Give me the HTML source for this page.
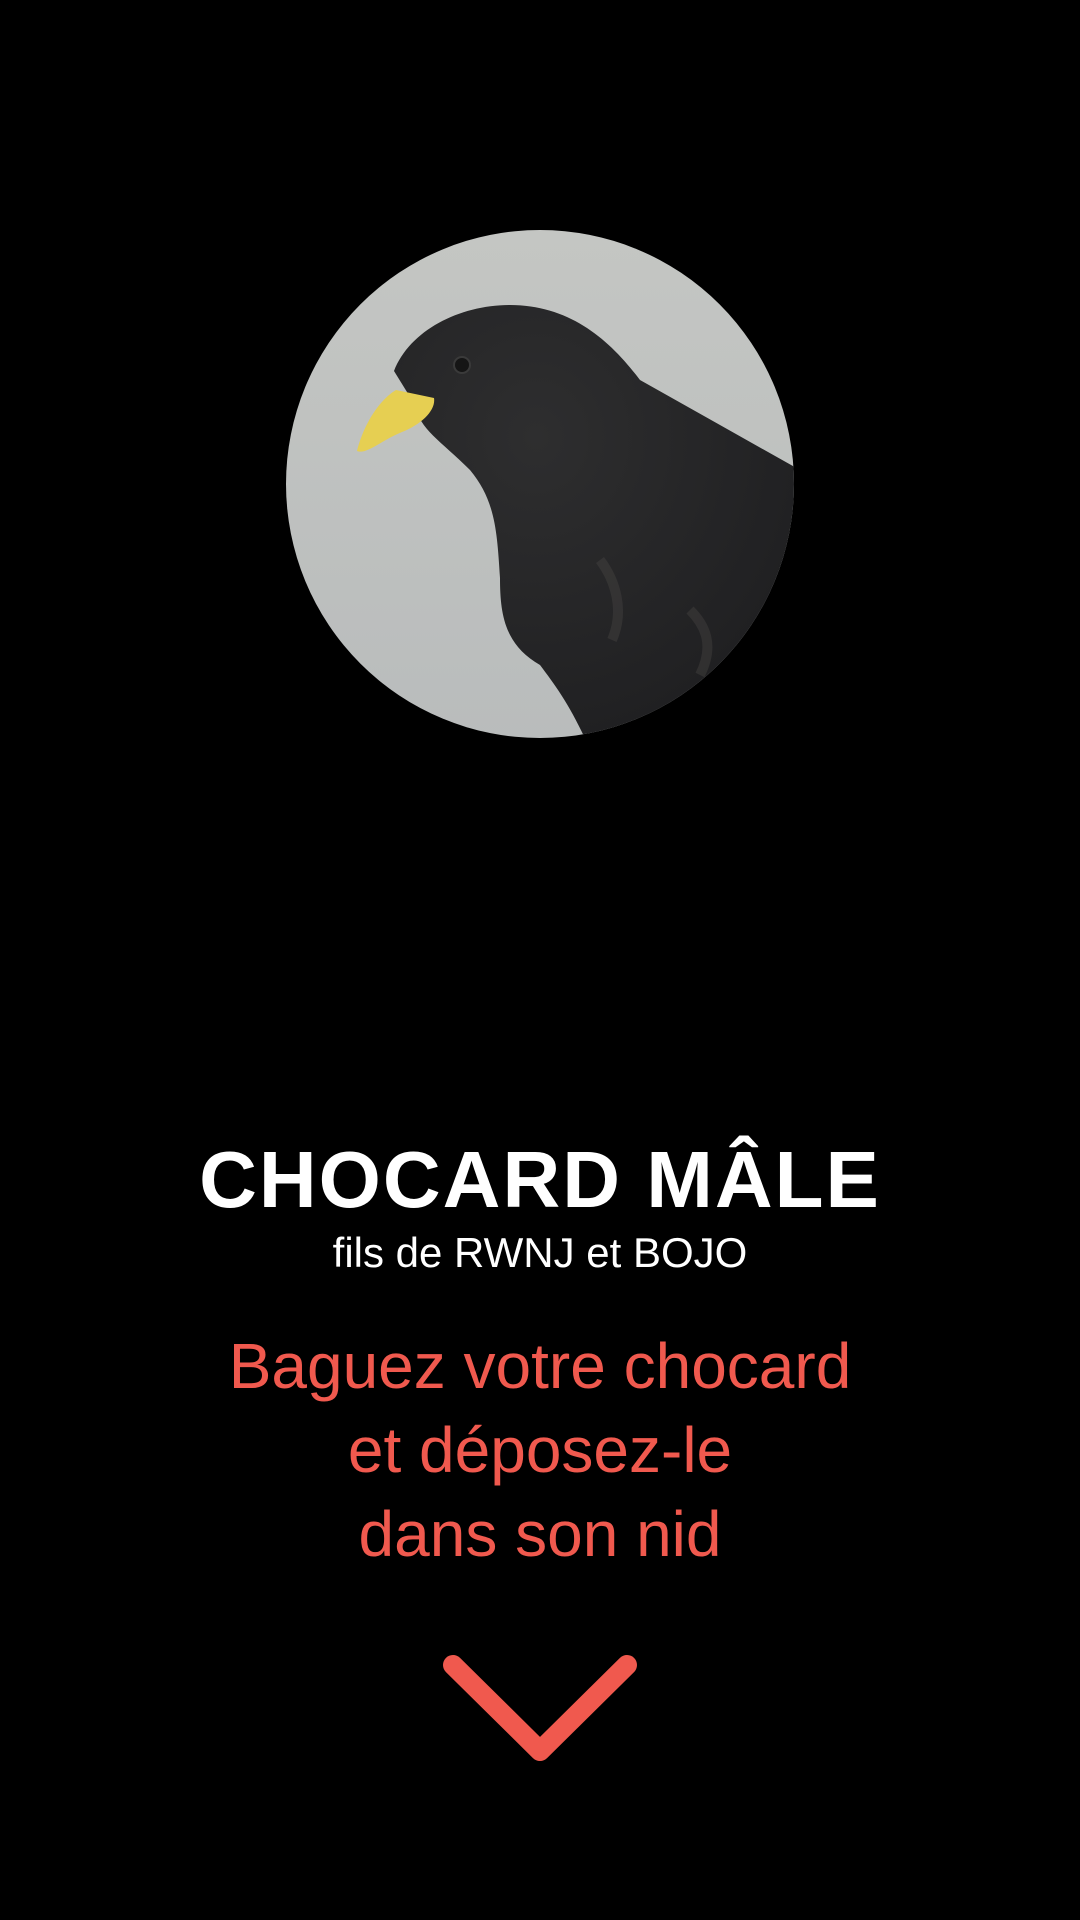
<!DOCTYPE html>
<html><head><meta charset="utf-8"><style>
html,body{margin:0;padding:0;background:#000;width:1080px;height:1920px;overflow:hidden;position:relative;font-family:"Liberation Sans",sans-serif}
.t{position:absolute;left:0;width:1080px;text-align:center;white-space:nowrap}
</style></head><body>
<svg style="position:absolute;left:286px;top:230px" width="508" height="508" viewBox="286 230 508 508">
<defs><clipPath id="c"><circle cx="540" cy="484" r="254"/></clipPath>
<linearGradient id="g" x1="0" y1="0" x2="0" y2="1"><stop offset="0" stop-color="#c4c6c3"/><stop offset="1" stop-color="#b9bcbc"/></linearGradient>
<radialGradient id="b" cx="0.35" cy="0.3" r="0.8"><stop offset="0" stop-color="#2e2e2f"/><stop offset="1" stop-color="#1e1e20"/></radialGradient></defs>
<g clip-path="url(#c)">
<rect x="280" y="225" width="520" height="520" fill="url(#g)"/>
<path d="M394 371 C410 330 460 305 510 305 C570 305 610 340 640 380 L720 425 L800 470 L800 745 L588 745 C570 705 555 685 540 665 C505 645 500 615 500 578 C497 530 495 500 470 470 C440 440 420 430 415 405 Z" fill="url(#b)"/>
<path d="M600 560 C615 580 625 610 612 640 M690 610 C705 625 715 645 700 675" stroke="#55534f" stroke-width="10" fill="none" opacity="0.3"/>
<path d="M434 398 L396 390 C376 402 362 430 357 451 C366 455 382 440 402 432 C422 424 436 410 434 398 Z" fill="#e6cf52"/>
<circle cx="462" cy="365" r="8" fill="#151515" stroke="#3a3a3a" stroke-width="2"/>
</g></svg>
<div class="t" style="top:1134px;font-size:80px;font-weight:bold;color:#fff;letter-spacing:2px">CHOCARD MÂLE</div>
<div class="t" style="top:1229px;font-size:42px;color:#fff">fils de RWNJ et BOJO</div>
<div class="t" style="top:1324px;font-size:64px;color:#f0594e;line-height:84px">Baguez votre chocard<br>et déposez-le<br>dans son nid</div>
<svg style="position:absolute;left:0;top:0" width="1080" height="1920"><path d="M453 1665 L540 1751 L627 1665" stroke="#f0594e" stroke-width="20" fill="none" stroke-linecap="round" stroke-linejoin="round"/></svg>
</body></html>
